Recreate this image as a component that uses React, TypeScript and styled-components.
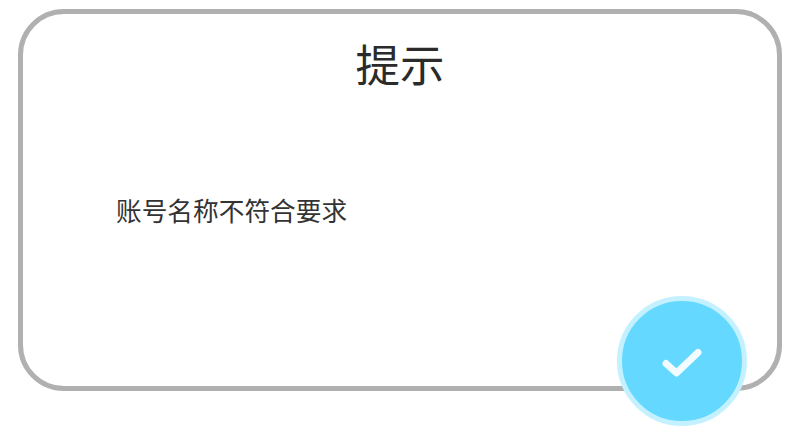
import React from "react";
import styled, { createGlobalStyle } from "styled-components";

const Global = createGlobalStyle`
  html, body { margin: 0; padding: 0; background: #fff; }
  body { font-family: "Noto Sans CJK SC", "Noto Sans", sans-serif; }
`;

const Page = styled.div`
  width: 800px;
  height: 434px;
  box-sizing: border-box;
  padding: 9px 18px 43px;
  overflow: hidden;
`;

const Dialog = styled.section`
  position: relative;
  box-sizing: border-box;
  height: 382px;
  border: 5px solid #b0b0b0;
  border-radius: 46px;
  background: #fff;
  padding: 17px 93px 0;
`;

const Title = styled.h1`
  margin: 0;
  text-align: center;
  font-size: 44.5px;
  line-height: 64px;
  font-weight: 400;
  color: #2b2b2b;
`;

const Message = styled.p`
  margin: 96px 0 0;
  font-size: 25.7px;
  line-height: 38px;
  font-weight: 400;
  color: #333333;
`;

const ConfirmButton = styled.button`
  position: absolute;
  left: 594px;
  top: 282px;
  width: 130px;
  height: 130px;
  box-sizing: border-box;
  padding: 0;
  border: 5px solid #c4f1ff;
  border-radius: 50%;
  background: #65d8ff;
  display: flex;
  align-items: center;
  justify-content: center;
`;

export default function App() {
  return (
    <Page>
      <Global />
      <Dialog>
        <Title>提示</Title>
        <Message>账号名称不符合要求</Message>
        <ConfirmButton aria-label="确定">
          <svg width="42" height="34" viewBox="0 0 42 34" fill="none">
            <path
              d="M5 19.5 L15.5 29 L37 8.5"
              stroke="#f2fcff"
              strokeWidth="7"
              strokeLinecap="round"
              strokeLinejoin="round"
            />
          </svg>
        </ConfirmButton>
      </Dialog>
    </Page>
  );
}
